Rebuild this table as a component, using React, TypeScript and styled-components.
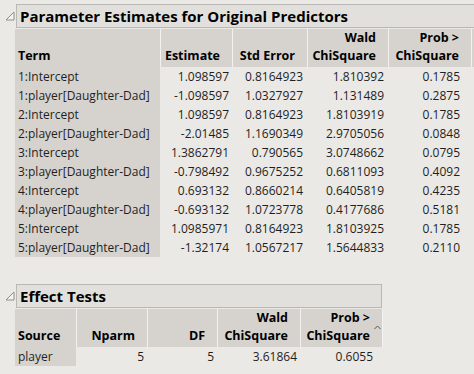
import React from "react";
import styled, { createGlobalStyle } from "styled-components";

const GlobalStyle = createGlobalStyle`
  html, body {
    margin: 0;
    padding: 0;
    background: #ebe9e6;
    overflow: hidden;
  }
  body {
    font-family: "Open Sans", "Noto Sans", sans-serif;
    color: #1c1c1c;
  }
`;

const Page = styled.div`
  width: 474px;
  height: 374px;
  overflow: hidden;
  padding-top: 4px;
  box-sizing: border-box;
`;

const Outline = styled.section<{ $width: number }>`
  width: ${(p) => p.$width}px;
  margin-bottom: 27px;
`;

const OutlineHead = styled.div`
  display: flex;
  align-items: stretch;
  height: 24px;
`;

const Toggle = styled.div`
  width: 16px;
  display: flex;
  align-items: center;
  justify-content: flex-end;
  padding-right: 1px;
  box-sizing: border-box;
`;

const TitleBox = styled.div`
  flex: 1;
  border: 1px solid #b9b8b5;
  background: #e2e0dc;
  display: flex;
  align-items: center;
  padding-left: 3px;
  font-size: 15px;
  font-weight: 700;
  color: #000;
  white-space: nowrap;
`;

const Grid = styled.div<{ $cols: string }>`
  display: grid;
  grid-template-columns: ${(p) => p.$cols};
  grid-auto-rows: 19px;
  margin-left: 15px;
  margin-top: 1px;
  font-size: 12px;
`;

const HeadCell = styled.div<{ $left?: boolean }>`
  position: relative;
  grid-row: span 2;
  height: 36px;
  background: #d6d3ce;
  border-right: 1px solid #f3f2f0;
  display: flex;
  flex-direction: column;
  justify-content: flex-end;
  align-items: ${(p) => (p.$left ? "flex-start" : "flex-end")};
  padding: 0 ${(p) => (p.$left ? 0 : 12)}px 2px ${(p) => (p.$left ? 3 : 0)}px;
  font-weight: 700;
  font-size: 12.5px;
  line-height: 18px;
  color: #000;
  white-space: nowrap;
  overflow: hidden;
`;

const Cell = styled.div<{ $term?: boolean; $pad?: number }>`
  background: ${(p) => (p.$term ? "#d6d3ce" : "transparent")};
  text-align: ${(p) => (p.$term ? "left" : "right")};
  padding: 0 ${(p) => (p.$term ? 0 : p.$pad ?? 4)}px 0 ${(p) => (p.$term ? 3 : 0)}px;
  margin-right: ${(p) => (p.$term ? 1 : 0)}px;
  line-height: 19px;
  white-space: nowrap;
  color: #1f1f1f;
`;

const Caret = styled.svg`
  position: absolute;
  right: 1px;
  top: 16px;
`;

const NextOutline = styled.div`
  margin-left: 16px;
  width: 207px;
  height: 20px;
  border: 1px solid #b9b8b5;
  border-bottom: none;
  background: #e4e2de;
`;

function Triangle() {
  return (
    <svg width="10" height="10" viewBox="0 0 10 10">
      <path d="M9 1 L9 9 L1 9 Z" fill="#f4f3f1" stroke="#8e8d8a" strokeWidth="1" strokeLinejoin="miter" />
    </svg>
  );
}

const estimates: [string, string, string, string, string][] = [
  ["1:Intercept", "1.098597", "0.8164923", "1.810392", "0.1785"],
  ["1:player[Daughter-Dad]", "-1.098597", "1.0327927", "1.131489", "0.2875"],
  ["2:Intercept", "1.098597", "0.8164923", "1.8103919", "0.1785"],
  ["2:player[Daughter-Dad]", "-2.01485", "1.1690349", "2.9705056", "0.0848"],
  ["3:Intercept", "1.3862791", "0.790565", "3.0748662", "0.0795"],
  ["3:player[Daughter-Dad]", "-0.798492", "0.9675252", "0.6811093", "0.4092"],
  ["4:Intercept", "0.693132", "0.8660214", "0.6405819", "0.4235"],
  ["4:player[Daughter-Dad]", "-0.693132", "1.0723778", "0.4177686", "0.5181"],
  ["5:Intercept", "1.0985971", "0.8164923", "1.8103925", "0.1785"],
  ["5:player[Daughter-Dad]", "-1.32174", "1.0567217", "1.5644833", "0.2110"],
];

export default function App() {
  return (
    <Page>
      <GlobalStyle />
      <Outline $width={560}>
        <OutlineHead>
          <Toggle>
            <Triangle />
          </Toggle>
          <TitleBox>Parameter Estimates for Original Predictors</TitleBox>
        </OutlineHead>
        <Grid $cols="146px 72px 75px 81px 83px 80px">
          <HeadCell $left>Term</HeadCell>
          <HeadCell>Estimate</HeadCell>
          <HeadCell>Std Error</HeadCell>
          <HeadCell>
            <span>Wald</span>
            <span>ChiSquare</span>
          </HeadCell>
          <HeadCell>
            <span>Prob &gt;</span>
            <span>ChiSquare</span>
          </HeadCell>
          <HeadCell />
          {estimates.map((r) => (
            <React.Fragment key={r[0]}>
              <Cell $term>{r[0]}</Cell>
              <Cell>{r[1]}</Cell>
              <Cell $pad={5}>{r[2]}</Cell>
              <Cell $pad={5}>{r[3]}</Cell>
              <Cell $pad={12}>{r[4]}</Cell>
              <Cell />
            </React.Fragment>
          ))}
        </Grid>
      </Outline>

      <Outline $width={382}>
        <OutlineHead>
          <Toggle>
            <Triangle />
          </Toggle>
          <TitleBox>Effect Tests</TitleBox>
        </OutlineHead>
        <Grid $cols="62px 71px 70px 83px 82px">
          <HeadCell $left>Source</HeadCell>
          <HeadCell>Nparm</HeadCell>
          <HeadCell>DF</HeadCell>
          <HeadCell>
            <span>Wald</span>
            <span>ChiSquare</span>
          </HeadCell>
          <HeadCell>
            <span>Prob &gt;</span>
            <span>ChiSquare</span>
            <Caret width="7" height="5" viewBox="0 0 7 5">
              <path d="M0.5 4 L3.5 1 L6.5 4" fill="none" stroke="#555" strokeWidth="1" />
            </Caret>
          </HeadCell>
          <Cell $term>player</Cell>
          <Cell $pad={4}>5</Cell>
          <Cell $pad={4}>5</Cell>
          <Cell $pad={4}>3.61864</Cell>
          <Cell $pad={10}>0.6055</Cell>
        </Grid>
      </Outline>
      <NextOutline />
    </Page>
  );
}
